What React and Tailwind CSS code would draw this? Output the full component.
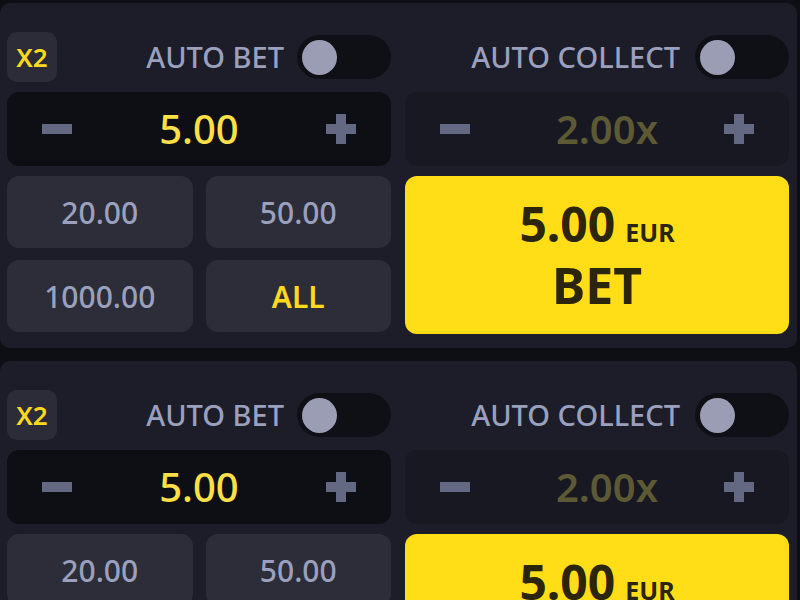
import React from "react";

const font = { fontFamily: '"Noto Sans", "Liberation Sans", sans-serif' };

function Minus() {
    return <span className="block w-[30px] h-[10px] bg-[#636883]" />;
}

function Plus() {
    return (
        <span className="relative block w-[30px] h-[30px]">
            <span className="absolute left-0 top-[10px] w-[30px] h-[10px] bg-[#636883]" />
            <span className="absolute left-[10px] top-0 w-[10px] h-[30px] bg-[#636883]" />
        </span>
    );
}

function Toggle() {
    return (
        <div className="w-[94px] h-[44px] rounded-full bg-[#0f1016] flex items-center px-[5px]">
            <span className="block w-[35px] h-[35px] rounded-full bg-[#9b9db5]" />
        </div>
    );
}

function Stepper({ value, dim }) {
    return (
        <div className={"h-[74px] rounded-[12px] flex items-center justify-between px-[35px] " + (dim ? "bg-[#171821]" : "bg-[#0e0f15]")}>
            <Minus />
            <span className={"text-[40px] leading-none " + (dim ? "text-[#5e5935] font-semibold pl-[20px]" : "text-[#fde047] font-medium")}>{value}</span>
            <Plus />
        </div>
    );
}

function Quick({ label, yellow }) {
    return (
        <button className={"h-[72px] rounded-[12px] bg-[#2c2d38] flex items-center justify-center text-[30px] " + (yellow ? "text-[#fcd91c] font-semibold" : "text-[#9aa0bd] font-medium")}>
            {label}
        </button>
    );
}

function BetPanel() {
    return (
        <div className="bg-[#1c1d29] rounded-[10px] pl-[7px] pr-[8px] pt-[29px] pb-[14px] grid grid-cols-2 gap-x-[14px]">
            <div className="flex flex-col">
                <div className="h-[50px] flex items-center justify-between">
                    <div className="w-[50px] h-[50px] rounded-[10px] bg-[#2b2c37] flex items-center justify-center text-[26px] font-semibold text-[#fcd91c]">X2</div>
                    <div className="flex items-center gap-[13px]">
                        <span className="text-[29px] font-medium text-[#9aa0be]">AUTO BET</span>
                        <Toggle />
                    </div>
                </div>
                <div className="mt-[10px]">
                    <Stepper value="5.00" />
                </div>
                <div className="mt-[10px] grid grid-cols-2 gap-x-[13px] gap-y-[12px]">
                    <Quick label="20.00" />
                    <Quick label="50.00" />
                    <Quick label="1000.00" />
                    <Quick label="ALL" yellow />
                </div>
            </div>
            <div className="flex flex-col">
                <div className="h-[50px] flex items-center justify-end gap-[15px]">
                    <span className="text-[29px] font-medium text-[#9aa0be]">AUTO COLLECT</span>
                    <Toggle />
                </div>
                <div className="mt-[10px]">
                    <Stepper value="2.00x" dim />
                </div>
                <button className="mt-[10px] h-[158px] rounded-[12px] bg-[#ffde17] flex flex-col items-center justify-center text-[#2b250c] font-bold">
                    <div className="flex items-baseline gap-[10px] leading-none">
                        <span className="text-[48px]">5.00</span>
                        <span className="text-[25px]">EUR</span>
                    </div>
                    <span className="text-[50px] leading-none mt-[12px]">BET</span>
                </button>
            </div>
        </div>
    );
}

export default function App() {
    return (
        <div style={font} className="w-[800px] h-[600px] overflow-hidden bg-[#0e0f14] pt-[3px] pr-[3px] flex flex-col gap-[13px]">
            <BetPanel />
            <BetPanel />
        </div>
    );
}
